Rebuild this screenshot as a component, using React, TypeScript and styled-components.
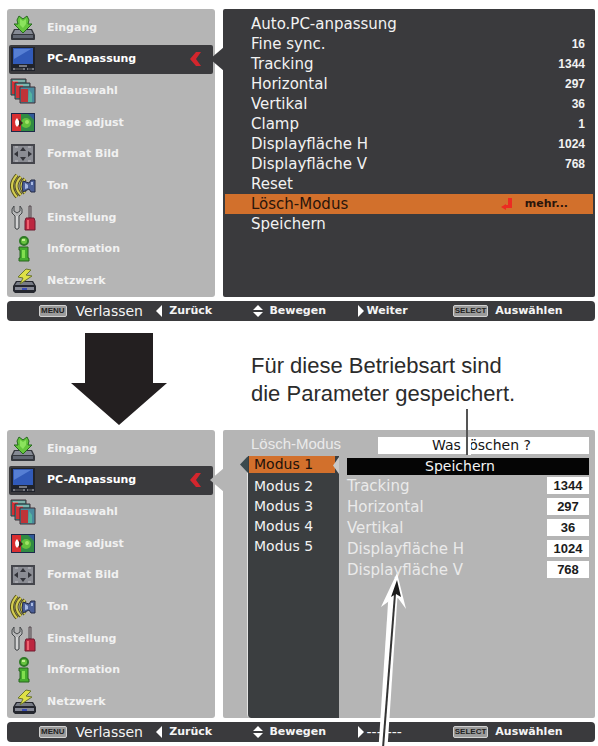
import React from "react";
import styled, { createGlobalStyle } from "styled-components";

const osd = `"DejaVu Sans", "Noto Sans", sans-serif`;
const arial = `"Liberation Sans", Arial, sans-serif`;
const dark = "#3a3a3d";
const grey = "#b5b5b5";
const orange = "#d2702c";

const GlobalStyle = createGlobalStyle`
  * { box-sizing: border-box; }
  body { margin: 0; background: #fff; }
  button { margin: 0; padding: 0; border: 0; background: none; color: inherit; font: inherit; text-align: left; cursor: pointer; }
  ul { margin: 0; padding: 0; list-style: none; }
`;

const Page = styled.main`
  min-height: 100vh;
  padding: 9px 3px 4px 7px;
  overflow: hidden;
  font-family: ${osd};
`;

const Screen = styled.section`
  position: relative;
  display: grid;
  grid-template-columns: minmax(0, 208fr) minmax(0, 372fr);
  gap: 4px 8px;
`;

const Sidebar = styled.nav`
  display: grid;
  grid-template-rows: repeat(9, 1fr);
  height: 288px;
  padding-top: 3px;
  border-radius: 3px;
  background: ${grey};
`;

const MenuItem = styled.button<{ $active?: boolean; $wide?: boolean }>`
  display: grid;
  grid-template-columns: 26px minmax(0, 1fr) 14px;
  column-gap: ${(p) => (p.$wide ? 7 : 11)}px;
  align-items: center;
  margin: 1px 2px;
  padding: 0 11px 0 1px;
  border-radius: 2px;
  background: ${(p) => (p.$active ? dark : "transparent")};
  color: ${(p) => (p.$active ? "#fff" : "#f1f1f1")};
  font-size: 11px;
  font-weight: bold;
  line-height: 14px;
  white-space: nowrap;
  svg { display: block; }
`;

const Panel = styled.div<{ $light?: boolean }>`
  position: relative;
  height: 288px;
  padding: ${(p) => (p.$light ? "7px 6px 0 24px" : "5px 2px")};
  border-radius: 2px;
  background: ${(p) => (p.$light ? grey : dark)};
`;

const Notch = styled.span<{ $light?: boolean }>`
  position: absolute;
  top: 38px;
  left: -13px;
  width: 14px;
  height: 24px;
  background: ${(p) => (p.$light ? grey : dark)};
  clip-path: polygon(0 50%, 100% 0, 100% 100%);
`;

const SettingRow = styled.button<{ $active?: boolean }>`
  display: flex;
  align-items: center;
  width: 100%;
  height: 20px;
  padding: 0 8px 0 26px;
  background: ${(p) => (p.$active ? orange : "transparent")};
  color: ${(p) => (p.$active ? "#2a150b" : "#f2f2f2")};
  font-size: 15px;
  line-height: 20px;
  white-space: nowrap;
`;

const SettingValue = styled.span`
  margin-left: auto;
  font: bold 12px ${arial};
`;

const More = styled.span`
  display: flex;
  align-items: center;
  gap: 12px;
  margin-left: auto;
  padding-right: 17px;
  font-size: 11px;
  font-weight: bold;
`;

const Footer = styled.footer`
  grid-column: 1 / -1;
  display: grid;
  grid-template-columns: minmax(0, 117fr) minmax(0, 97fr) minmax(0, 103fr) minmax(0, 96fr) minmax(0, 142fr);
  align-items: center;
  height: 20px;
  padding-left: 32px;
  border-radius: 4px;
  background: ${dark};
  color: #f4f4f4;
`;

const Key = styled.button<{ $big?: boolean; $gap?: number }>`
  display: flex;
  align-items: center;
  gap: ${(p) => p.$gap ?? 5}px;
  font-size: ${(p) => (p.$big ? 14 : 11)}px;
  font-weight: ${(p) => (p.$big ? "normal" : "bold")};
  line-height: 20px;
  white-space: nowrap;
`;

const KeyCap = styled.span`
  padding: 0 1px;
  border: 1px solid #d0d0d0;
  border-radius: 2px;
  background: #9b9b9b;
  color: #222;
  font: bold 8px/10px ${arial};
`;

const Middle = styled.div`
  display: flex;
  height: 109px;
`;

const ArrowSlot = styled.div`
  flex: 0 0 244px;
  padding: 12px 0 0 64px;
`;

const Caption = styled.p`
  margin: 31px 0 0;
  color: #2b2b2b;
  font: 22px/28px ${arial};
  white-space: nowrap;
`;

const TitleRow = styled.div`
  display: grid;
  grid-template-columns: minmax(0, 131fr) minmax(0, 211fr);
  height: 17px;
`;

const Title = styled.h2`
  margin: 0;
  padding-left: 4px;
  color: #eaeaea;
  font: normal 15px/14px ${arial};
  white-space: nowrap;
`;

const Wide = styled.button<{ $black?: boolean }>`
  width: 100%;
  height: 17px;
  padding-right: ${(p) => (p.$black ? 16 : 4)}px;
  background: ${(p) => (p.$black ? "#050505" : "#fff")};
  color: ${(p) => (p.$black ? "#f4f4f4" : "#161616")};
  font-size: 14px;
  line-height: 17px;
  text-align: center;
  white-space: nowrap;
`;

const Detail = styled.div`
  display: grid;
  grid-template-columns: minmax(0, 92fr) minmax(0, 242fr);
  gap: 8px;
  padding-top: 2px;
`;

const ModeList = styled.ul`
  height: 262px;
  border-left: 1px solid #e4e4e4;
  border-radius: 0 0 0 4px;
  background: #3b3e40;
`;

const Mode = styled.li`
  position: relative;
  height: 20px;
`;

const ModeButton = styled.button<{ $active?: boolean }>`
  display: block;
  width: ${(p) => (p.$active ? "calc(100% - 5px)" : "100%")};
  height: ${(p) => (p.$active ? 17 : 20)}px;
  margin: 0 0 0 ${(p) => (p.$active ? 1 : 0)}px;
  padding-left: ${(p) => (p.$active ? 5 : 6)}px;
  background: ${(p) => (p.$active ? orange : "transparent")};
  color: ${(p) => (p.$active ? "#21120b" : "#f2f2f2")};
  font-size: 14px;
  line-height: ${(p) => (p.$active ? 17 : 20)}px;
  white-space: nowrap;
`;

const ModeTip = styled.span<{ $end?: boolean }>`
  position: absolute;
  top: ${(p) => (p.$end ? 1 : 0)}px;
  ${(p) => (p.$end ? "right: 0;" : "left: -8px;")}
  width: ${(p) => (p.$end ? 6 : 8)}px;
  height: 17px;
  background: ${(p) => (p.$end ? "#c9c9c9" : "#3b4a4e")};
  clip-path: polygon(0 50%, 100% 0, 100% 100%);
`;

const ParamTable = styled.table`
  width: 100%;
  border-collapse: collapse;
  color: #eaeaea;
  tr { height: 21px; }
  th { padding: 0; font-size: 15px; font-weight: normal; line-height: 20px; text-align: left; white-space: nowrap; }
  td { width: 42px; padding: 0; }
`;

const ParamValue = styled.span`
  display: block;
  height: 17px;
  background: #fff;
  color: #1c1c1c;
  font: bold 13px/17px ${arial};
  text-align: center;
`;

const Leader = styled.svg`
  position: absolute;
  top: -21px;
  left: 456px;
  width: 8px;
  height: 48px;
  pointer-events: none;
`;

const Pointer = styled.svg`
  position: absolute;
  bottom: -4px;
  left: 369px;
  width: 34px;
  height: 176px;
  pointer-events: none;
`;

const iconShapes: Record<string, React.ReactNode> = {
  input: (
    <>
      <path d="M4 14h18l3 6v4q0 1-1 1H2q-1 0-1-1v-4z" fill="#34373d" />
      <path d="M5 15h16l2 4H3z" fill="#858a94" />
      <path d="M3 20h20v3H3z" fill="#626873" />
      <path d="M9 1l4 3 4-3 2 4-1 4h4l-9 9-9-9h4L7 5z" fill="#65c63d" stroke="#256a1d" />
      <path d="M10 4l3 2 3-2v5l-3 4-3-3z" fill="#8be35d" />
    </>
  ),
  pc: (
    <>
      <path d="M1 1h24v24H1z" fill="#20232b" />
      <path d="M3 2h20v16H3z" fill="#315ab8" />
      <path d="M4 3h17L4 13z" fill="#567fd4" />
      <path d="M9 19h8v2H9zM3 22h12v2H3zm14 0h7v2h-7z" fill="#777980" />
      <path d="M5 23h8m5 0h4" stroke="#111" />
    </>
  ),
  image: (
    <>
      <path d="M1 1h15v16H1z" fill="#3f8b83" stroke="#3e3139" />
      <path d="M2 3h6v13H2z" fill="#d52f34" />
      <path d="M5 5h15v16H5z" fill="#3b9590" stroke="#3e3139" />
      <path d="M6 7h7v13H6z" fill="#cf3338" />
      <path d="M10 9h15v16H10z" fill="#4a8b9e" stroke="#3e3139" />
      <path d="M11 11h7v13h-7z" fill="#bf3438" />
      <path d="M19 12l3 4v8h-4z" fill="#54b3a0" />
      <path d="M3 3h12M7 7h12" stroke="#c1d6d0" />
    </>
  ),
  adjust: (
    <>
      <path d="M1 3h24v19H1z" fill="#1c294a" />
      <path d="M2 4h9v17H2z" fill="#d92f31" />
      <path d="M11 4h13v17H11z" fill="#318b43" />
      <path d="M18 4h6v6z" fill="#315b9a" />
      <circle cx="16" cy="13" r="5" fill="#62bf3c" />
      <path d="M7 8q-4 4 0 9l3-4z" fill="#fff" />
      <path d="M9 9l4 4-4 4z" fill="#3b231b" />
      <circle cx="17" cy="12" r="2" fill="#a0e264" />
    </>
  ),
  format: (
    <>
      <path d="M2 4h22v18H2z" fill="#8b8d94" stroke="#45464c" strokeWidth="2" />
      <path d="M13 6l3 4h-6zM13 20l3-4h-6zM4 13l4-3v6zM22 13l-4-3v6z" fill="#33343a" />
      <path d="M5 6h3m10 0h3M5 20h3m10 0h3" stroke="#c0c0c5" />
    </>
  ),
  sound: (
    <>
      <path d="M7 2Q-3 13 7 24M11 4Q2 13 11 22M15 6Q8 13 15 20" fill="none" stroke="#55511f" strokeWidth="4" />
      <path d="M7 2Q-3 13 7 24M11 4Q2 13 11 22M15 6Q8 13 15 20" fill="none" stroke="#d5ce50" strokeWidth="2" />
      <path d="M13 8l6 2 2-3h4v12h-4l-2-3-6 3q-2-5 0-11z" fill="#4b5f98" stroke="#252b45" />
      <path d="M15 10l3 2v3l-3 1zM21 9h2v3h-2z" fill="#a9bae1" />
    </>
  ),
  tools: (
    <>
      <path d="M4 1v5l3 2 3-2V1l2 3v4l-3 3v12q-2 3-4 0V11L2 8V4z" fill="#b7b8b9" stroke="#45484a" />
      <path d="M7 11v12" stroke="#eee" />
      <path d="M19 1h2v12h-2z" fill="#aaa" stroke="#52474c" />
      <path d="M16 13h8l1 3v9H15v-9z" fill="#bc2740" stroke="#711d31" />
      <path d="M18 15v9" stroke="#ed6270" strokeWidth="2" />
    </>
  ),
  info: (
    <>
      <circle cx="14" cy="5" r="4" fill="#67c340" stroke="#2e7a25" strokeWidth="2" />
      <path d="M9 11h9v11h1v3H9v-3h1v-8H9z" fill="#45ad2e" stroke="#28651f" />
      <path d="M12 14h3v8h-3z" fill="#82df4f" />
      <path d="M12 4h3" stroke="#c2f094" strokeWidth="2" />
    </>
  ),
  network: (
    <>
      <path d="M6 13h17l3 5v5l-2 2H5l-2-2v-5z" fill="#25272e" />
      <path d="M7 14h15l2 3H5z" fill="#777b85" />
      <path d="M5 19h19v3H5z" fill="#858894" />
      <path d="M12 20h5v2h-5z" fill="#3b4db4" />
      <path d="M16 1L8 9l5 1-3 6 12-8-6-1 5-5z" fill="#dfe046" stroke="#6c782d" />
    </>
  ),
};

const Icon = ({ name }: { name: string }) => (
  <svg width="26" height="26" viewBox="0 0 26 26" aria-hidden="true">{iconShapes[name]}</svg>
);

const menu = [
  { icon: "input", label: "Eingang" },
  { icon: "pc", label: "PC-Anpassung", active: true },
  { icon: "image", label: "Bildauswahl", wide: true },
  { icon: "adjust", label: "Image adjust", wide: true },
  { icon: "format", label: "Format Bild" },
  { icon: "sound", label: "Ton" },
  { icon: "tools", label: "Einstellung" },
  { icon: "info", label: "Information" },
  { icon: "network", label: "Netzwerk" },
];

const settings: [string, string?][] = [
  ["Auto.PC-anpassung"],
  ["Fine sync.", "16"],
  ["Tracking", "1344"],
  ["Horizontal", "297"],
  ["Vertikal", "36"],
  ["Clamp", "1"],
  ["Displayfläche H", "1024"],
  ["Displayfläche V", "768"],
  ["Reset"],
  ["Lösch-Modus"],
  ["Speichern"],
];

const params = [
  ["Tracking", "1344"],
  ["Horizontal", "297"],
  ["Vertikal", "36"],
  ["Displayfläche H", "1024"],
  ["Displayfläche V", "768"],
];

const SideMenu = () => (
  <Sidebar aria-label="Menü">
    {menu.map((m) => (
      <MenuItem key={m.label} $active={m.active} $wide={m.wide}>
        <Icon name={m.icon} />
        <span>{m.label}</span>
        {m.active && (
          <svg width="14" height="16" viewBox="0 0 14 16" aria-hidden="true">
            <path d="M8 1h5L8 8l5 7H8L2 8z" fill="#d3262d" />
          </svg>
        )}
      </MenuItem>
    ))}
  </Sidebar>
);

const Tri = ({ d, w = 7 }: { d: string; w?: number }) => (
  <svg width={w} height="14" viewBox={`0 0 ${w} 14`} aria-hidden="true"><path d={d} fill="#fff" /></svg>
);

const KeyBar = ({ next }: { next?: string }) => (
  <Footer>
    <Key $big $gap={9}><KeyCap>MENU</KeyCap>Verlassen</Key>
    <Key $gap={6}><Tri d="M6 1v12L0 7z" />Zurück</Key>
    <Key><Tri w={11} d="M5 1l5 5H0zM0 8h10l-5 5z" />Bewegen</Key>
    <Key $big={!next} $gap={3}><Tri d="M1 1v12l6-6z" />{next ?? "-------"}</Key>
    <Key $gap={7}><KeyCap>SELECT</KeyCap>Auswählen</Key>
  </Footer>
);

export default function App() {
  return (
    <Page>
      <GlobalStyle />
      <Screen>
        <SideMenu />
        <Panel>
          <Notch />
          {settings.map(([label, value]) => {
            const active = label === "Lösch-Modus";
            return (
              <SettingRow key={label} $active={active}>
                {label}
                {value && <SettingValue>{value}</SettingValue>}
                {active && (
                  <More>
                    <svg width="12" height="12" viewBox="0 0 12 12" aria-hidden="true">
                      <path d="M7 0h4v10H5v2L0 9l5-3v1h2z" fill="#ec2c22" />
                    </svg>
                    mehr...
                  </More>
                )}
              </SettingRow>
            );
          })}
        </Panel>
        <KeyBar next="Weiter" />
      </Screen>

      <Middle>
        <ArrowSlot>
          <svg width="96" height="92" viewBox="0 0 96 92" aria-hidden="true">
            <path d="M14 0h68v50h14L48 92 0 50h14z" fill="#231f20" />
          </svg>
        </ArrowSlot>
        <Caption>Für diese Betriebsart sind<br />die Parameter gespeichert.</Caption>
      </Middle>

      <Screen>
        <SideMenu />
        <Panel $light>
          <Notch $light />
          <TitleRow>
            <Title>Lösch-Modus</Title>
            <Wide>Was löschen ?</Wide>
          </TitleRow>
          <Detail>
            <ModeList>
              {[1, 2, 3, 4, 5].map((n) => (
                <Mode key={n}>
                  {n === 1 && <ModeTip />}
                  <ModeButton $active={n === 1}>Modus {n}</ModeButton>
                  {n === 1 && <ModeTip $end />}
                </Mode>
              ))}
            </ModeList>
            <div>
              <Wide $black>Speichern</Wide>
              <ParamTable>
                <tbody>
                  {params.map(([label, value]) => (
                    <tr key={label}>
                      <th scope="row">{label}</th>
                      <td><ParamValue>{value}</ParamValue></td>
                    </tr>
                  ))}
                </tbody>
              </ParamTable>
            </div>
          </Detail>
        </Panel>
        <KeyBar />
        <Leader viewBox="0 0 8 48" aria-hidden="true">
          <path d="M6 28v18" stroke="#fff" strokeWidth="4" />
          <path d="M4 0v46" stroke="#555" strokeWidth="2" />
        </Leader>
        <Pointer viewBox="0 0 34 176" aria-hidden="true">
          <path d="M17 26L7 178" stroke="#fff" strokeWidth="9" />
          <path d="M21 3L5 37l11-8 6-1 8 11z" fill="#fff" />
          <path d="M19 24L7 178" stroke="#343434" strokeWidth="2" />
          <path d="M21 10l-6 17 5-3 5 3z" fill="#1b1b1b" />
        </Pointer>
      </Screen>
    </Page>
  );
}
